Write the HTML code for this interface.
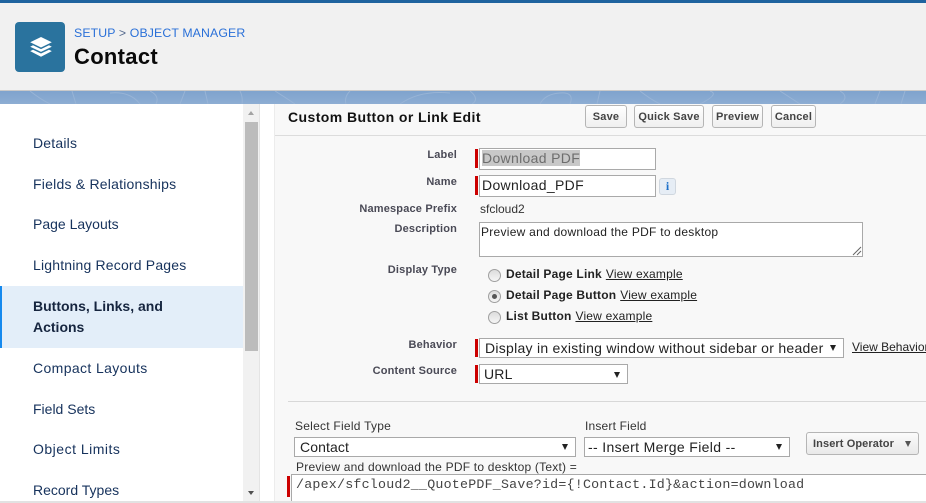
<!DOCTYPE html>
<html><head><meta charset="utf-8">
<style>
html,body{margin:0;padding:0;width:926px;height:503px;overflow:hidden;background:#fff;font-family:"Liberation Sans",Arial,sans-serif;}
.a{position:absolute;white-space:nowrap;}
.nav{position:absolute;left:33px;font-size:14px;line-height:20px;color:#16325c;white-space:nowrap;}
.lbl{position:absolute;right:469px;font-size:11px;font-weight:bold;color:#4a4a56;letter-spacing:.18px;white-space:nowrap;line-height:13px;}
.inp{position:absolute;background:#fff;border:1px solid #a9a9a9;box-sizing:border-box;font-size:14px;color:#222;white-space:nowrap;}
.req{position:absolute;width:3px;background:#c00;}
.btn{position:absolute;top:105px;height:23px;box-sizing:border-box;border:1px solid #b5b5b5;border-radius:3px;background:linear-gradient(#fff,#efefef);font-size:11px;font-weight:bold;color:#444;text-align:center;line-height:22px;letter-spacing:.2px;}
.rad{position:absolute;width:13px;height:13px;box-sizing:border-box;border:1px solid #a0a0a0;border-radius:50%;background:linear-gradient(#dcdcdc,#f6f6f6);}
.rt{position:absolute;font-size:12px;font-weight:bold;color:#222;white-space:nowrap;line-height:14px;letter-spacing:.2px;}
.rt u{font-weight:normal;color:#222;margin-left:.4px;}
.arr{position:absolute;width:0;height:0;border-left:3.5px solid transparent;border-right:3.5px solid transparent;border-top:6px solid #222;}
.sm{position:absolute;font-size:12px;line-height:14px;color:#333;white-space:nowrap;}
</style></head><body>

<!-- header -->
<div class="a" style="left:0;top:0;width:926px;height:3px;background:#1f639f"></div>
<div class="a" style="left:0;top:3px;width:926px;height:88px;background:#f1f1f1;border-bottom:1px solid #c9c9c9;box-sizing:border-box"></div>
<div class="a" style="left:0;top:91px;width:926px;height:13px;background:linear-gradient(#7fa3cd,#8dadd3)"></div>
<svg class="a" style="left:0;top:91px" width="926" height="13" fill="none" stroke="#98b4d6" stroke-width="1">
<path d="M30 0q10 8 20 13M72 0l4 13M110 2q20-2 30 11M150 0q10 5 6 13M185 0l-5 13M205 0l3 13M240 0q3 6 2 13M275 0q8 5 20 13M350 0q-6 6-4 13M400 13q20-14 50-11M470 0q10 8 2 13M540 13q5-10 20-11t10 11M600 0l-3 13M640 0q10 8 20 13M700 13q20-10 10-13M780 0l20 13M840 0q10 6 0 13M880 0l-5 13M905 0l-4 13"/>
</svg>
<div class="a" style="left:15px;top:22px;width:50px;height:50px;background:#2a739e;border-radius:4px"></div>
<svg class="a" style="left:29px;top:36px" width="24" height="22" viewBox="0 0 24 22" fill="#fff">
<path d="M12 1L22.800 6.300 12 11.500 1.200 6.300z"/>
<path d="M4 9.300L12 13.100 20 9.300 22.800 10.700 12 15.900 1.200 10.700z"/>
<path d="M4 13.700L12 17.500 20 13.700 22.800 15.100 12 20.800 1.200 15.100z"/>
</svg>
<div class="a" style="left:74px;top:25px;font-size:12.300px;line-height:16px;color:#2a70d8;letter-spacing:.12px">SETUP <span style="color:#54698d">&gt;</span> OBJECT MANAGER</div>
<div class="a" style="left:74px;top:43px;font-size:22px;line-height:27px;font-weight:bold;color:#0a0a0a;letter-spacing:.3px">Contact</div>

<!-- sidebar -->
<div class="nav" style="top:133px;letter-spacing:.2px">Details</div>
<div class="nav" style="top:174px;letter-spacing:.22px">Fields &amp; Relationships</div>
<div class="nav" style="top:214px;letter-spacing:0">Page Layouts</div>
<div class="nav" style="top:255px;letter-spacing:.18px">Lightning Record Pages</div>
<div class="a" style="left:0;top:286px;width:243px;height:62px;background:#e3eef9"></div>
<div class="a" style="left:0;top:286px;width:2px;height:62px;background:#1589ee"></div>
<div class="nav" style="top:296px;font-weight:bold;color:#16253f;letter-spacing:0">Buttons, Links, and</div>
<div class="nav" style="top:317px;font-weight:bold;color:#16253f;letter-spacing:0">Actions</div>
<div class="nav" style="top:358px;letter-spacing:.38px">Compact Layouts</div>
<div class="nav" style="top:399px;letter-spacing:0">Field Sets</div>
<div class="nav" style="top:439px;letter-spacing:.5px">Object Limits</div>
<div class="nav" style="top:480px;letter-spacing:0">Record Types</div>

<!-- scrollbar -->
<div class="a" style="left:243px;top:104px;width:17px;height:397px;background:#f1f1f1;border-right:1px solid #e4e4e4;box-sizing:border-box"></div>
<div class="a" style="left:245px;top:122px;width:13px;height:229px;background:#bcbcbc"></div>
<div class="a" style="left:248px;top:111px;width:0;height:0;border-left:3.5px solid transparent;border-right:3.5px solid transparent;border-bottom:4px solid #a3a3a3"></div>
<div class="a" style="left:248px;top:491px;width:0;height:0;border-left:3.5px solid transparent;border-right:3.5px solid transparent;border-top:4px solid #505050"></div>

<!-- panel -->
<div class="a" style="left:274px;top:104px;width:652px;height:397px;background:#f8f8f8;border-left:1px solid #ececec;box-sizing:border-box"></div>
<div class="a" style="left:275px;top:135px;width:651px;height:1px;background:#dcdcdc"></div>
<div class="a" style="left:288px;top:108px;font-size:14px;line-height:18px;font-weight:bold;color:#111;letter-spacing:.42px">Custom Button or Link Edit</div>
<div class="btn" style="left:585px;width:42px">Save</div>
<div class="btn" style="left:634px;width:70px">Quick Save</div>
<div class="btn" style="left:712px;width:51px">Preview</div>
<div class="btn" style="left:771px;width:45px">Cancel</div>

<div class="lbl" style="top:149px">Label</div>
<div class="lbl" style="top:176px">Name</div>
<div class="lbl" style="top:203px">Namespace Prefix</div>
<div class="lbl" style="top:223px">Description</div>
<div class="lbl" style="top:264px">Display Type</div>
<div class="lbl" style="top:339px">Behavior</div>
<div class="lbl" style="top:365px">Content Source</div>

<div class="req" style="left:475px;top:149px;height:19px"></div>
<div class="inp" style="left:479px;top:148px;width:177px;height:22px;line-height:19px;padding-left:2px;letter-spacing:.33px"><span style="background:#c8c8c8;color:#6d6d6d">Download PDF</span></div>
<div class="req" style="left:475px;top:176px;height:19px"></div>
<div class="inp" style="left:479px;top:175px;width:177px;height:22px;line-height:19px;padding-left:2px;letter-spacing:.33px">Download_PDF</div>
<div class="a" style="left:659px;top:178px;width:17px;height:17px;box-sizing:border-box;border:1px solid #d0d7df;border-radius:3px;background:#e6edf5;color:#1b6fc9;font:bold 12px/15px 'Liberation Serif',serif;text-align:center">i</div>
<div class="sm" style="left:480px;top:202px">sfcloud2</div>
<div class="inp" style="left:479px;top:222px;width:384px;height:35px;font-size:12px;line-height:14px;padding:2px 1px;letter-spacing:.27px">Preview and download the PDF to desktop</div>
<svg class="a" style="left:851px;top:245px" width="11" height="11" stroke="#666" fill="none"><path d="M2 10L10 2M6 10L10 6"/></svg>

<div class="rad" style="left:488px;top:269px"></div>
<div class="rt" style="left:506px;top:267px">Detail Page Link <u>View example</u></div>
<div class="rad" style="left:488px;top:290px"></div>
<div class="a" style="left:492px;top:294px;width:5px;height:5px;border-radius:50%;background:#555"></div>
<div class="rt" style="left:506px;top:288px">Detail Page Button <u>View example</u></div>
<div class="rad" style="left:488px;top:311px"></div>
<div class="rt" style="left:506px;top:309px">List Button <u>View example</u></div>

<div class="req" style="left:475px;top:339px;height:18px"></div>
<div class="inp" style="left:479px;top:338px;width:365px;height:20px;line-height:19px;padding-left:5px;letter-spacing:.27px">Display in existing window without sidebar or header</div>
<div class="arr" style="left:830px;top:345px"></div>
<div class="a" style="left:852px;top:340px;width:74px;overflow:hidden;font-size:12px;line-height:14px;color:#222;text-decoration:underline">View Behavior Options</div>
<div class="req" style="left:475px;top:365px;height:18px"></div>
<div class="inp" style="left:479px;top:364px;width:149px;height:20px;line-height:19px;padding-left:4px;letter-spacing:.2px">URL</div>
<div class="arr" style="left:614px;top:372px"></div>

<div class="a" style="left:288px;top:401px;width:638px;height:1px;background:#d8d8d8"></div>
<div class="sm" style="left:295px;top:419px;letter-spacing:.25px">Select Field Type</div>
<div class="sm" style="left:585px;top:419px;letter-spacing:.18px">Insert Field</div>
<div class="inp" style="left:294px;top:437px;width:282px;height:20px;line-height:19px;padding-left:5px;letter-spacing:.1px">Contact</div>
<div class="arr" style="left:562px;top:444px"></div>
<div class="inp" style="left:584px;top:437px;width:206px;height:20px;line-height:19px;padding-left:3px;letter-spacing:.35px">-- Insert Merge Field --</div>
<div class="arr" style="left:776px;top:444px"></div>
<div class="a" style="left:806px;top:432px;width:113px;height:23px;box-sizing:border-box;border:1px solid #b5b5b5;border-radius:3px;background:linear-gradient(#fbfbfb,#e9e9e9);font-size:11px;font-weight:bold;color:#444;line-height:22px;padding-left:6px;letter-spacing:.1px">Insert Operator</div>
<div class="arr" style="left:905px;top:441px;border-top-color:#555"></div>
<div class="sm" style="left:296px;top:460px;letter-spacing:.22px">Preview and download the PDF to desktop (Text) =</div>

<div class="req" style="left:287px;top:476px;height:21px"></div>
<div class="a" style="left:291px;top:474px;width:635px;height:27px;background:#fff;border-left:1px solid #a9a9a9;border-top:1px solid #a9a9a9;box-sizing:border-box"></div>
<div class="a" style="left:296px;top:477px;font-family:'Liberation Mono',monospace;font-size:13.300px;line-height:15px;color:#444;letter-spacing:.22px">/apex/sfcloud2__QuotePDF_Save?id={!Contact.Id}&amp;action=download</div>
<div class="a" style="left:0;top:501px;width:926px;height:2px;background:#e2e2e2"></div>
</body></html>
